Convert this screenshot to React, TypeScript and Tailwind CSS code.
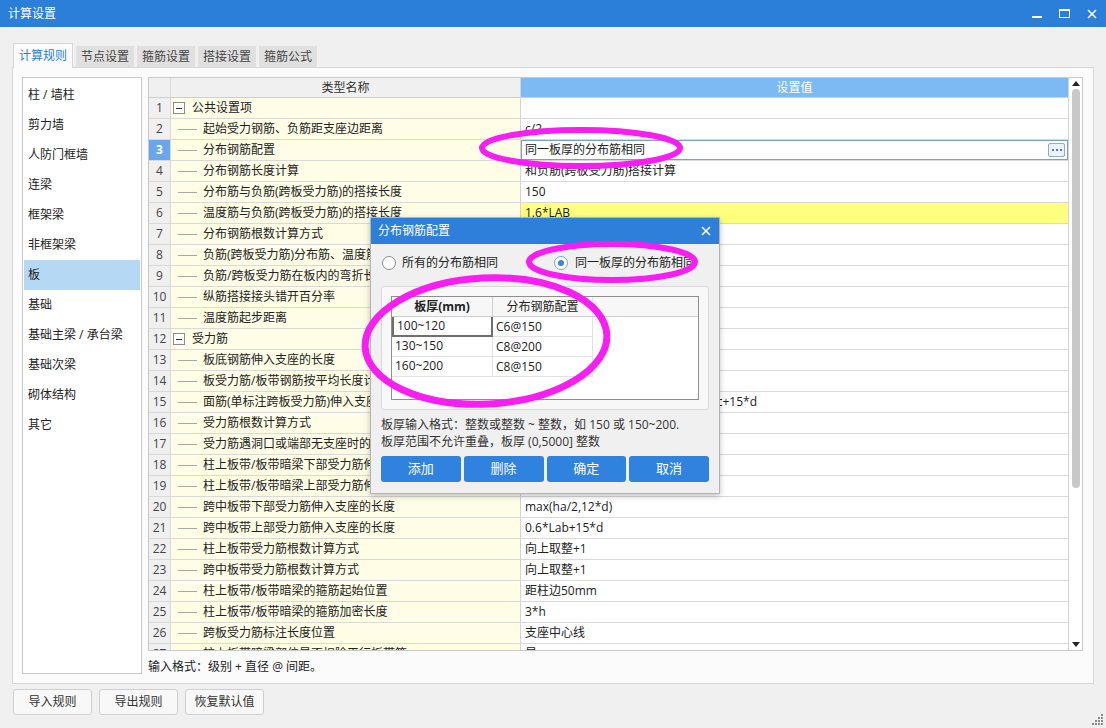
import React from 'react';

type RowData = {
  name: string;
  value?: string;
  group?: boolean;
};

const rows: RowData[] = [
  { name: '公共设置项', group: true },
  { name: '起始受力钢筋、负筋距支座边距离', value: 'c/2' },
  { name: '分布钢筋配置', value: '同一板厚的分布筋相同' },
  { name: '分布钢筋长度计算', value: '和负筋(跨板受力筋)搭接计算' },
  { name: '分布筋与负筋(跨板受力筋)的搭接长度', value: '150' },
  { name: '温度筋与负筋(跨板受力筋)的搭接长度', value: '1.6*LAB' },
  { name: '分布钢筋根数计算方式', value: '向下取整+1' },
  { name: '负筋(跨板受力筋)分布筋、温度筋是否计入板中', value: '是' },
  { name: '负筋/跨板受力筋在板内的弯折长度', value: '板厚-2*保护层' },
  { name: '纵筋搭接接头错开百分率', value: '50%' },
  { name: '温度筋起步距离', value: 's' },
  { name: '受力筋', group: true },
  { name: '板底钢筋伸入支座的长度', value: 'max(ha/2,5*d)' },
  { name: '板受力筋/板带钢筋按平均长度计算', value: '否' },
  { name: '面筋(单标注跨板受力筋)伸入支座的锚固长度', value: '能直锚就直锚否则按公式计算:ha-bhc+15*d' },
  { name: '受力筋根数计算方式', value: '向上取整+1' },
  { name: '受力筋遇洞口或端部无支座时的弯折长度', value: '板厚-2*保护层' },
  { name: '柱上板带/板带暗梁下部受力筋伸入支座的长度', value: 'ha-bhc+15*d' },
  { name: '柱上板带/板带暗梁上部受力筋伸入支座的长度', value: '0.6*Lab+15*d' },
  { name: '跨中板带下部受力筋伸入支座的长度', value: 'max(ha/2,12*d)' },
  { name: '跨中板带上部受力筋伸入支座的长度', value: '0.6*Lab+15*d' },
  { name: '柱上板带受力筋根数计算方式', value: '向上取整+1' },
  { name: '跨中板带受力筋根数计算方式', value: '向上取整+1' },
  { name: '柱上板带/板带暗梁的箍筋起始位置', value: '距柱边50mm' },
  { name: '柱上板带/板带暗梁的箍筋加密长度', value: '3*h' },
  { name: '跨板受力筋标注长度位置', value: '支座中心线' },
  { name: '柱上板带暗梁部位是否扣除平行板带筋', value: '是' },
];

const sideItems = [
  '柱 / 墙柱',
  '剪力墙',
  '人防门框墙',
  '连梁',
  '框架梁',
  '非框架梁',
  '板',
  '基础',
  '基础主梁 / 承台梁',
  '基础次梁',
  '砌体结构',
  '其它',
];

const tabs = ['计算规则', '节点设置', '箍筋设置', '搭接设置', '箍筋公式'];

function GridRow({ row, index }: { row: RowData; index: number }) {
  const n = index + 1;
  const isSelected = n === 3;
  const isYellow = n === 6;

  return (
    <div className="flex h-[21px] shrink-0 border-b border-[#d9d9d9]">
      {/* row number */}
      <div
        className={`w-[22px] shrink-0 border-r border-[#d9d9d9] text-center leading-[20px] ${
          isSelected ? 'bg-[#6aa7ea] font-bold text-white' : 'bg-[#f0f0f0] text-[#444]'
        }`}
      >
        {n}
      </div>

      {/* name column */}
      <div className="flex w-[350px] shrink-0 items-center overflow-hidden whitespace-nowrap border-r border-[#d4d4d4] bg-[#fffde6]">
        {row.group ? (
          <>
            <div className="ml-[2px] flex h-[12px] w-[12px] shrink-0 items-center justify-center border border-[#8c8c8c] bg-white">
              <div className="h-px w-[6px] bg-[#333]" />
            </div>
            <span className="ml-[7px] leading-[20px]">{row.name}</span>
          </>
        ) : (
          <>
            <div className="ml-[7px] h-px w-[19px] shrink-0 bg-[#a8a8a8]" />
            <span className="ml-[6px] leading-[20px]">{row.name}</span>
          </>
        )}
      </div>

      {/* value column */}
      <div
        className={`w-[547px] shrink-0 overflow-hidden whitespace-nowrap ${
          isYellow ? 'bg-[#ffff80]' : 'bg-white'
        }`}
      >
        {isSelected ? (
          <div className="flex h-[20px] items-center justify-between border border-[#7d9fc6] pl-[3px] pr-[2px]">
            <span className="leading-[18px]">{row.value}</span>
            <div className="flex h-[14px] w-[17px] items-center justify-center gap-[2px] rounded-[2px] border border-[#86acd8] bg-[#eaf2fb]">
              <div className="h-[2px] w-[2px] bg-[#4d7fbf]" />
              <div className="h-[2px] w-[2px] bg-[#4d7fbf]" />
              <div className="h-[2px] w-[2px] bg-[#4d7fbf]" />
            </div>
          </div>
        ) : (
          <span className="block pl-[4px] leading-[20px]">{row.value}</span>
        )}
      </div>
    </div>
  );
}

function Radio({ checked }: { checked?: boolean }) {
  return (
    <div
      className={`flex h-[14px] w-[14px] shrink-0 items-center justify-center rounded-full border bg-white ${
        checked ? 'border-[#7fa4cf]' : 'border-[#8a8a8a]'
      }`}
    >
      {checked && <div className="h-[6px] w-[6px] rounded-full bg-[#3b86db]" />}
    </div>
  );
}

function SlabDialog() {
  const data = [
    ['100~120', 'C6@150'],
    ['130~150', 'C8@200'],
    ['160~200', 'C8@150'],
  ];

  return (
    <div className="absolute left-[370px] top-[217px] flex h-[277px] w-[350px] flex-col border border-[#b4b4b4] bg-[#f0f0f0] shadow-[0_2px_6px_rgba(0,0,0,0.25)]">
      <div className="flex h-[26px] shrink-0 items-center justify-between bg-[#2e7fd9] pl-[7px] pr-[8px] text-[12px] text-white">
        <span>分布钢筋配置</span>
        <svg width="10" height="10" viewBox="0 0 10 10">
          <path d="M1 1 L9 9 M9 1 L1 9" stroke="white" strokeWidth="1.6" />
        </svg>
      </div>

      <div className="flex flex-col px-[10px]">
        {/* radio options */}
        <div className="mt-[11px] flex h-[16px] items-center">
          <div className="ml-[1px] flex items-center">
            <Radio />
            <span className="ml-[6px]">所有的分布筋相同</span>
          </div>
          <div className="ml-[56px] flex items-center">
            <Radio checked />
            <span className="ml-[7px]">同一板厚的分布筋相同</span>
          </div>
        </div>

        {/* group box */}
        <div className="mt-[15px] h-[124px] rounded-[3px] border border-[#d9d9d9] bg-[#f8f8f8] p-[9px]">
          <div className="h-[104px] border border-[#8f8f8f] bg-white">
            <div className="flex h-[20px] border-b border-[#cfcfcf] bg-[#f7f7f7]">
              <div className="w-[101px] border-r border-[#cfcfcf] text-center font-bold leading-[19px]">
                板厚(mm)
              </div>
              <div className="w-[100px] border-r border-[#e2e2e2] text-center leading-[19px]">
                分布钢筋配置
              </div>
            </div>
            {data.map(([a, b], i) => (
              <div key={a} className="flex h-[20px]">
                <div
                  className={`w-[101px] pl-[3px] leading-[18px] ${
                    i === 0
                      ? 'border-2 border-t-0 border-[#6f6f6f]'
                      : 'border-b border-r border-[#e2e2e2]'
                  }`}
                >
                  {a}
                </div>
                <div className="w-[100px] border-b border-r border-[#e2e2e2] pl-[3px] leading-[19px]">
                  {b}
                </div>
              </div>
            ))}
          </div>
        </div>

        {/* hint */}
        <div className="mt-[6px] flex flex-col text-[#333]">
          <div className="h-[17px] leading-[17px]">板厚输入格式：整数或整数 ~ 整数，如 150 或 150~200.</div>
          <div className="h-[17px] leading-[17px]">板厚范围不允许重叠，板厚 (0,5000] 整数</div>
        </div>

        {/* buttons */}
        <div className="mt-[6px] flex gap-[3px]">
          {['添加', '删除', '确定', '取消'].map((t) => (
            <div
              key={t}
              className="flex h-[26px] w-[80px] items-center justify-center rounded-[3px] bg-[#2f82de] text-[13px] text-white"
            >
              {t}
            </div>
          ))}
        </div>
      </div>
    </div>
  );
}

function Annotations() {
  return (
    <svg
      className="pointer-events-none absolute left-0 top-0"
      width="1106"
      height="728"
      viewBox="0 0 1106 728"
    >
      <ellipse cx="581" cy="148" rx="99" ry="18" fill="none" stroke="#f61ef0" strokeWidth="6" />
      <ellipse cx="612" cy="262" rx="83" ry="18" fill="none" stroke="#f61ef0" strokeWidth="6" />
      <ellipse
        cx="486"
        cy="341"
        rx="121"
        ry="63"
        fill="none"
        stroke="#f61ef0"
        strokeWidth="7"
        transform="rotate(-3 486 341)"
      />
    </svg>
  );
}

export default function App() {
  return (
    <div className="relative h-[728px] w-[1106px] overflow-hidden bg-[#f0f0f0] font-['Open_Sans','Noto_Sans_CJK_SC',sans-serif] text-[12px] text-[#222]">
      {/* Title bar */}
      <div className="flex h-[27px] items-center justify-between bg-[#2b7fd9] pl-[8px] pr-[9px] text-white">
        <span className="text-[12px]">计算设置</span>
        <div className="flex items-center gap-[17px]">
          <svg width="10" height="10" viewBox="0 0 10 10">
            <rect x="0" y="7" width="10" height="2" fill="white" />
          </svg>
          <svg width="11" height="10" viewBox="0 0 11 10">
            <rect x="0.5" y="0.5" width="10" height="8" fill="none" stroke="white" />
            <rect x="0" y="0" width="11" height="2" fill="white" />
          </svg>
          <svg width="10" height="10" viewBox="0 0 10 10">
            <path d="M1 1 L9 9 M9 1 L1 9" stroke="white" strokeWidth="1.6" />
          </svg>
        </div>
      </div>

      {/* Tabs */}
      <div className="mt-[16px] flex h-[24px] items-end gap-[3px] pl-[13px]">
        {tabs.map((t, i) =>
          i === 0 ? (
            <div
              key={t}
              className="relative z-10 -mb-px flex h-[25px] w-[60px] items-center justify-center border border-b-0 border-[#d6d6d6] bg-[#fbfbfb] text-[#2b7fd9]"
            >
              {t}
            </div>
          ) : (
            <div
              key={t}
              className="flex h-[21px] w-[58px] items-center justify-center bg-[#e0e0e0] text-[#444]"
            >
              {t}
            </div>
          )
        )}
      </div>

      {/* Tab panel */}
      <div className="ml-[12px] flex h-[617px] w-[1082px] gap-[6px] border border-[#d6d6d6] bg-[#fbfbfb] pl-[9px] pt-[9px]">
        {/* Left list */}
        <div className="flex h-[597px] w-[120px] shrink-0 flex-col border border-[#cacaca] bg-white pt-[2px]">
          {sideItems.map((s) => (
            <div
              key={s}
              className={`mx-px flex h-[30px] items-center pl-[4px] ${s === '板' ? 'bg-[#b5d8f5]' : ''}`}
            >
              {s}
            </div>
          ))}
        </div>

        {/* Grid + hint */}
        <div className="flex flex-col">
          <div className="flex h-[574px] w-[935px] border border-[#c9c9c9] bg-white">
            <div className="flex w-[919px] flex-col overflow-hidden">
              <div className="flex h-[20px] shrink-0 border-b border-[#cfcfcf]">
                <div className="w-[22px] shrink-0 border-r border-[#d9d9d9] bg-[#f0f0f0]" />
                <div className="w-[350px] shrink-0 border-r border-[#d4d4d4] bg-[#f0f0f0] text-center leading-[19px] text-[#333]">
                  类型名称
                </div>
                <div className="w-[547px] shrink-0 bg-[#7db9f3] text-center leading-[19px] text-white">
                  设置值
                </div>
              </div>
              {rows.map((r, i) => (
                <GridRow key={i} row={r} index={i} />
              ))}
            </div>

            {/* scrollbar */}
            <div className="flex w-[14px] flex-col items-center border-l border-[#d4d4d4] bg-white">
              <svg className="mt-[3px]" width="8" height="5" viewBox="0 0 8 5">
                <path d="M0 5 L4 0 L8 5 Z" fill="#222" />
              </svg>
              <div className="mt-[3px] h-[399px] w-[8px] rounded-[4px] bg-[#c8c8c8]" />
              <div className="flex-1" />
              <svg className="mb-[3px]" width="8" height="5" viewBox="0 0 8 5">
                <path d="M0 0 L8 0 L4 5 Z" fill="#222" />
              </svg>
            </div>
          </div>
          <div className="mt-[8px] leading-[16px] text-[#222]">输入格式：级别 + 直径 @ 间距。</div>
        </div>
      </div>

      {/* Bottom buttons */}
      <div className="ml-[13px] mt-[5px] flex gap-[7px]">
        {['导入规则', '导出规则', '恢复默认值'].map((t) => (
          <div
            key={t}
            className="flex h-[26px] w-[79px] items-center justify-center rounded-[3px] border border-[#cfcfcf] bg-[#f8f8f8] text-[#333]"
          >
            {t}
          </div>
        ))}
      </div>

      {/* resize grip */}
      <svg className="absolute bottom-[2px] right-[2px]" width="12" height="12" viewBox="0 0 12 12">
        <rect x="9" y="0" width="2" height="2" fill="#8a8a8a" />
        <rect x="6" y="3" width="2" height="2" fill="#8a8a8a" />
        <rect x="9" y="3" width="2" height="2" fill="#8a8a8a" />
        <rect x="3" y="6" width="2" height="2" fill="#8a8a8a" />
        <rect x="6" y="6" width="2" height="2" fill="#8a8a8a" />
        <rect x="9" y="6" width="2" height="2" fill="#8a8a8a" />
        <rect x="0" y="9" width="2" height="2" fill="#8a8a8a" />
        <rect x="3" y="9" width="2" height="2" fill="#8a8a8a" />
        <rect x="6" y="9" width="2" height="2" fill="#8a8a8a" />
        <rect x="9" y="9" width="2" height="2" fill="#8a8a8a" />
      </svg>

      <SlabDialog />
      <Annotations />
    </div>
  );
}
